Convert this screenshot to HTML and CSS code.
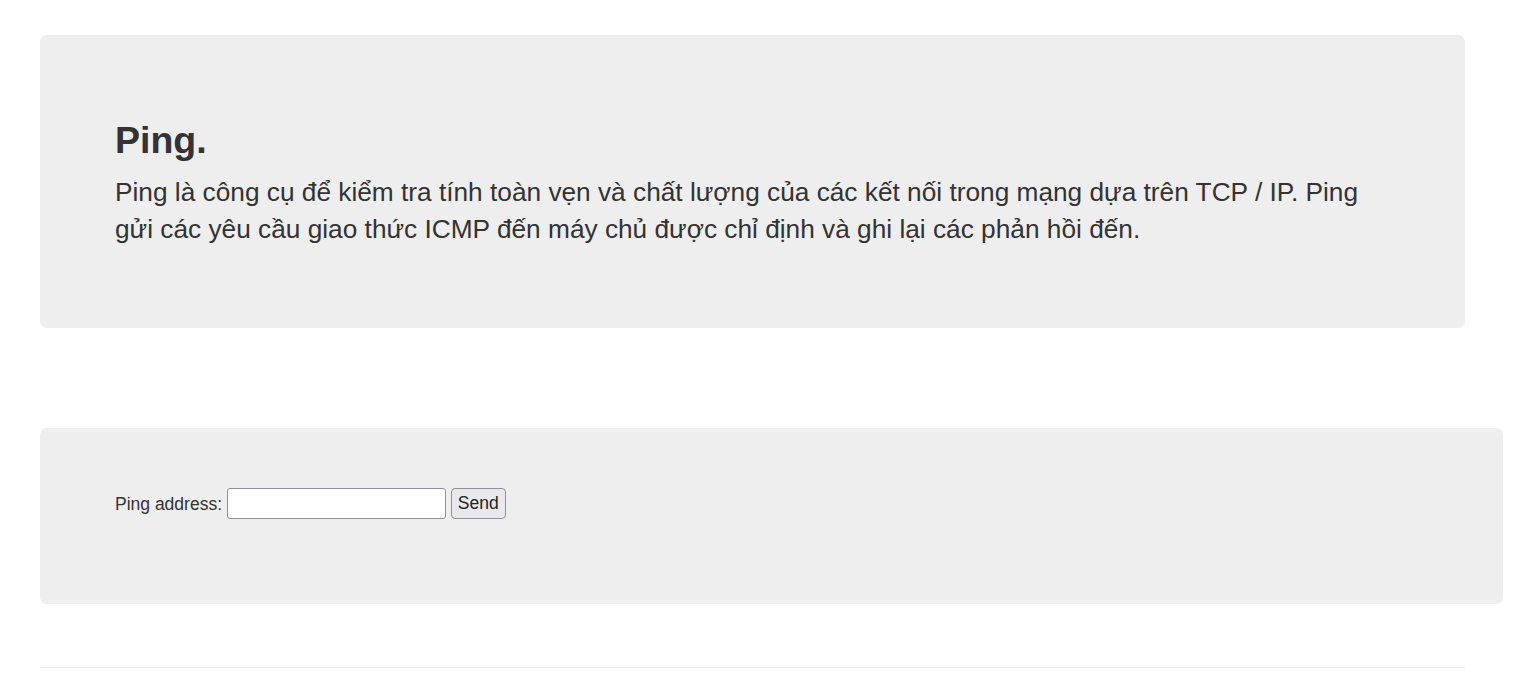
FILE: index.html
```html
<!DOCTYPE html>
<html lang="vi">
<head>
<meta charset="utf-8">
<title>Ping</title>
<link rel="stylesheet" href="styles.css">
</head>
<body>
<div class="page">
  <div class="jumbotron">
    <h2 class="title">Ping.</h2>
    <p class="lead">Ping là công cụ để kiểm tra tính toàn vẹn và chất lượng của các kết nối trong mạng dựa trên TCP / IP. Ping gửi các yêu cầu giao thức ICMP đến máy chủ được chỉ định và ghi lại các phản hồi đến.</p>
  </div>
  <div class="form-box">
    <form class="ping-form">
      <label class="ping-label" for="addr">Ping address:</label>
      <input class="ping-input" id="addr" type="text">
      <button class="ping-btn" type="button">Send</button>
    </form>
  </div>
  <hr class="rule">
</div>
</body>
</html>
```

FILE: styles.css
```css
html, body {
  margin: 0;
  padding: 0;
  background: #fff;
}
body {
  font-family: "Liberation Sans", Arial, sans-serif;
  font-size: 17.5px;
  line-height: 1.42857;
  color: #333;
}
.page {
  padding: 35px 0 0 40px;
}
.jumbotron {
  width: 1425px;
  box-sizing: border-box;
  padding: 60px 75px;
  background: #eee;
  border-radius: 7px;
}
.title {
  margin: 25px 0 12.5px;
  font-size: 37.5px;
  line-height: 1.1;
  font-weight: bold;
}
.lead {
  margin: 0 0 18.75px;
  font-size: 26.25px;
  line-height: 37.5px;
}
.form-box {
  margin-top: 100px;
  width: 1463px;
  box-sizing: border-box;
  padding: 60px 75px 85px;
  background: #eee;
  border-radius: 7px;
}
.ping-form {
  margin: 0;
  height: 31px;
  line-height: 31px;
}
.ping-label {
  font-size: 17.5px;
  vertical-align: middle;
}
.ping-input {
  box-sizing: border-box;
  width: 219px;
  height: 31px;
  margin: 0;
  padding: 1px 4px;
  border: 1px solid #8f8f9d;
  border-radius: 3px;
  background: #fff;
  font-family: "Liberation Sans", Arial, sans-serif;
  font-size: 17.5px;
  vertical-align: middle;
}
.ping-btn {
  box-sizing: border-box;
  width: 55px;
  height: 31px;
  margin: 0;
  padding: 0 6px;
  border: 1px solid #8f8f9d;
  border-radius: 4px;
  background: #e9e9ed;
  color: #222;
  font-family: "Liberation Sans", Arial, sans-serif;
  font-size: 17.5px;
  vertical-align: middle;
}
.rule {
  margin: 63px 0 0;
  width: 1425px;
  border: 0;
  border-top: 1px solid #eee;
}
```
